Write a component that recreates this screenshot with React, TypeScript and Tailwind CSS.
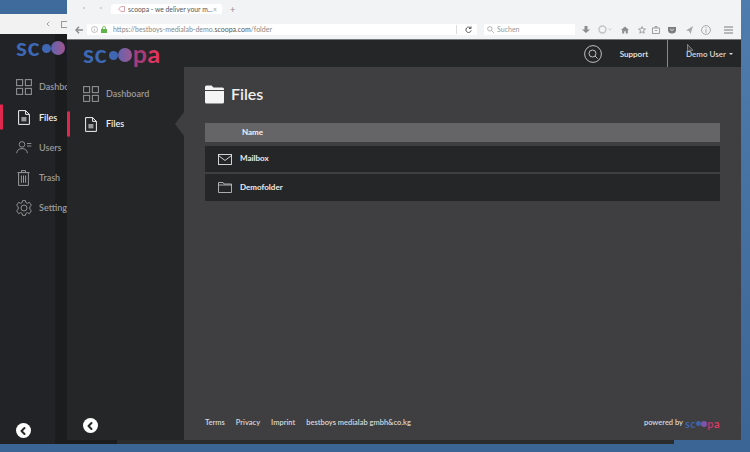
import React from "react";
import { ChevronLeft } from "lucide-react";

const font = "font-['Lato',sans-serif]";

const Logo = ({ small }: { small?: boolean }) => {
  // logo letters stay real text, the two o's are plain circles
  if (small) {
    return (
      <span className="flex items-center font-['Lato',sans-serif] text-[11px] font-bold leading-none tracking-[0.5px]">
        <span className="text-[#3f62a8]">sc</span>
        <span className="mt-[1px] h-[5px] w-[5px] rounded-full bg-[#3f62a8]" />
        <span className="mt-[1px] h-[6px] w-[6px] rounded-full bg-[#7d55a8]" />
        <span className="text-[#b23a6e]">p</span>
        <span className="text-[#d93a63]">a</span>
      </span>
    );
  }
  return (
    <span className="flex items-center font-['Lato',sans-serif] text-[25px] font-bold leading-none tracking-[0.4px]">
      <span className="text-[#3d68b5]">sc</span>
      <span className="ml-[2px] mt-[3px] h-[9px] w-[9px] shrink-0 rounded-full bg-[#4067b4]" />
      <span className="mt-[3px] h-[14px] w-[14px] shrink-0 rounded-full bg-gradient-to-r from-[#5f62b0] to-[#a0558f]" />
      <span className="ml-[1px] text-[#a83a78]">p</span>
      <span className="text-[#dd3560]">a</span>
    </span>
  );
};

const GridIcon = () => (
  <svg width="16" height="16" viewBox="0 0 16 16" fill="none" stroke="#8f8f90" strokeWidth="1.1">
    <rect x="0.6" y="0.6" width="6" height="6" />
    <rect x="9.4" y="0.6" width="6" height="6" />
    <rect x="0.6" y="9.4" width="6" height="6" />
    <rect x="9.4" y="9.4" width="6" height="6" />
  </svg>
);

const FileIcon = () => (
  <svg width="12" height="15" viewBox="0 0 12 15" fill="none" stroke="#f2f2f2" strokeWidth="1">
    <path d="M0.6 0.6H7.6L11.4 4.4V14.4H0.6Z" />
    <path d="M7.6 0.6V4.4H11.4" />
    <rect x="3.4" y="7" width="5" height="4.4" fill="#9a9a9a" stroke="none" />
  </svg>
);

const UsersIcon = () => (
  <svg width="16" height="13" viewBox="0 0 16 13" fill="none" stroke="#9a9a9b" strokeWidth="0.9">
    <circle cx="6" cy="3.4" r="2.8" />
    <path d="M0.6 12.2C1 9 3 7.6 6 7.6S11 9 11.4 12.2" />
    <path d="M11 2.5H15.4M11 5H15.4" />
  </svg>
);

const TrashIcon = () => (
  <svg width="13" height="16" viewBox="0 0 13 16" fill="none" stroke="#9a9a9b" strokeWidth="1">
    <path d="M0.5 2.6H12.5M4.5 2.4V0.6H8.5V2.4M1.6 2.6V15.4H11.4V2.6" />
    <path d="M4.4 5.5V12.8M6.5 5.5V12.8M8.6 5.5V12.8" />
  </svg>
);

const GearIcon = () => (
  <svg width="16" height="16" viewBox="0 0 16 16" fill="none" stroke="#9a9a9b" strokeWidth="0.9">
    <path d="M6.6 0.6H9.4L9.9 2.6L11.6 3.3L13.4 2.3L15.4 5.4L13.8 6.7V9.3L15.4 10.6L13.4 13.7L11.6 12.7L9.9 13.4L9.4 15.4H6.6L6.1 13.4L4.4 12.7L2.6 13.7L0.6 10.6L2.2 9.3V6.7L0.6 5.4L2.6 2.3L4.4 3.3L6.1 2.6Z" />
    <circle cx="8" cy="8" r="3" />
  </svg>
);

const BackCircle = () => (
  <span className="flex h-[15px] w-[15px] items-center justify-center rounded-full bg-white">
    <ChevronLeft size={12} strokeWidth={4} color="#252628" className="-ml-[1px]" />
  </span>
);

const NavItem = ({ icon, label, active }: { icon: React.ReactNode; label: string; active?: boolean }) => (
  <div className="relative flex h-[30px] items-center pl-[8px]">
    {active && <span className="absolute left-0 top-1/2 h-[25px] w-[3px] -translate-y-1/2 bg-[#e0284f]" />}
    <span className="flex w-[31px] justify-center">{icon}</span>
    <span className={`text-[9px] font-semibold whitespace-nowrap ${active ? "text-[#f2f2f2]" : "text-[#9a9a9b]"}`}>{label}</span>
  </div>
);

const BackWindow = () => (
  <div className={`absolute left-0 top-0 flex h-[444px] w-[674px] flex-col overflow-hidden bg-[#2a2b2d] ${font}`}>
    <div className="h-[14px] shrink-0 bg-[#3f6a9c]" />
    <div className="flex h-[20px] shrink-0 items-center gap-[6px] bg-[#f2f2f3] pl-[44px] text-[#777]">
      <ChevronLeft size={8} />
      <span className="ml-[3px] h-[7px] w-[7px] border border-[#999]" />
    </div>
    <div className="flex w-[117px] flex-1 flex-col bg-[linear-gradient(to_right,#222326_55px,#1b1c1e_55px)]">
      <div className="pl-[16px]">
        <Logo />
      </div>
      <div className="mt-[13px] flex flex-col gap-[0.25px]">
        <NavItem icon={<GridIcon />} label="Dashboard" />
        <NavItem active icon={<FileIcon />} label="Files" />
        <NavItem icon={<UsersIcon />} label="Users" />
        <NavItem icon={<TrashIcon />} label="Trash" />
        <NavItem icon={<GearIcon />} label="Settings" />
      </div>
      <div className="mb-[6px] mt-auto pl-[16px]">
        <BackCircle />
      </div>
    </div>
  </div>
);

const BrowserChrome = () => (
  <div className="h-[40px] shrink-0 border-b border-[#77787a] bg-[#f2f3f5] text-[#8d8d8f]">
    <div className="flex h-[24px] items-start pt-[4px]">
      <span className="ml-[16px] mt-[3px] h-[2px] w-[2px] bg-[#d4d4d6]" />
      <span className="ml-[15px] mt-[3px] h-[2px] w-[2px] bg-[#d4d4d6]" />
      <span className="ml-[9px] flex h-[10px] w-[111px] items-center rounded-t-[3px] bg-white pl-[7px] pr-[5px] text-[6.8px] text-[#555] whitespace-nowrap">
        <svg width="7" height="6" viewBox="0 0 7 6" fill="none" stroke="#d98a98" strokeWidth="0.8">
          <path d="M0.5 3L3 0.6H6.5V5.4H3Z" />
        </svg>
        <span className="ml-[3px] flex-1">scoopa - we deliver your m...</span>
        <span className="text-[#999]">×</span>
      </span>
      <span className="ml-[8px] text-[9px] leading-[12px]">+</span>
    </div>
    <div className="flex h-[11px] items-center">
      <svg className="ml-[8px]" width="8" height="8" viewBox="0 0 8 8" fill="none" stroke="#8d8d8f" strokeWidth="1.4">
        <path d="M4 0.8L1 4L4 7.2M1 4H8" />
      </svg>
      <div className="ml-[4px] flex h-[11px] w-[390px] items-center gap-[3px] bg-white pl-[4px] text-[7px] text-[#888]">
        <svg width="7" height="7" viewBox="0 0 7 7" fill="none" stroke="#999" strokeWidth="0.6">
          <circle cx="3.5" cy="3.5" r="3" />
          <path d="M3.5 3V5.2M3.5 1.8V2.4" />
        </svg>
        <svg width="6" height="7" viewBox="0 0 6 7">
          <path d="M1.5 3V2A1.5 1.5 0 0 1 4.5 2V3" fill="none" stroke="#5fb548" strokeWidth="0.8" />
          <rect y="3" width="6" height="4" fill="#5fb548" />
        </svg>
        <span className="ml-[3px] flex-1 whitespace-nowrap">
          https://bestboys-medialab-demo.<span className="text-[#555]">scoopa.com</span>/folder
        </span>
        <span className="h-[9px] w-px bg-[#ddd]" />
        <svg className="mx-[5px]" width="7" height="7" viewBox="0 0 7 7" fill="none" stroke="#555" strokeWidth="1">
          <path d="M5.8 2.2A2.7 2.7 0 1 0 6.2 4.5M6 0.5V2.5H4" />
        </svg>
      </div>
      <div className="ml-[7px] flex h-[11px] w-[91px] items-center gap-[3px] bg-white pl-[3px] text-[7px] text-[#999]">
        <svg width="7" height="7" viewBox="0 0 7 7" fill="none" stroke="#aaa" strokeWidth="0.9">
          <circle cx="2.8" cy="2.8" r="2.2" />
          <path d="M4.5 4.5L6.8 6.8" />
        </svg>
        <span>Suchen</span>
      </div>
      <div className="ml-[7px] flex items-center">
        <svg width="8" height="8" viewBox="0 0 8 8" fill="#8d8d8f"><path d="M2.5 0H5.5V3.5H8L4 7L0 3.5H2.5Z" /></svg>
        <svg className="ml-[8px]" width="14" height="9" viewBox="0 0 14 9" fill="none" stroke="#c4c4c6" strokeWidth="1.4">
          <circle cx="4.5" cy="4.5" r="3.5" />
          <path d="M10.5 3.5L12 5.2L13.5 3.5" strokeWidth="0.8" />
        </svg>
        <svg className="ml-[9px]" width="8" height="8" viewBox="0 0 8 8" fill="#8d8d8f"><path d="M4 0.5L8 4H6.8V7.5H4.8V5.2H3.2V7.5H1.2V4H0Z" /></svg>
        <svg className="ml-[9px]" width="8" height="8" viewBox="0 0 8 8" fill="none" stroke="#8d8d8f" strokeWidth="0.8"><path d="M4 0.6L5 3H7.5L5.5 4.6L6.2 7.2L4 5.8L1.8 7.2L2.5 4.6L0.5 3H3Z" /></svg>
        <svg className="ml-[6px]" width="8" height="8" viewBox="0 0 8 8" fill="none" stroke="#8d8d8f" strokeWidth="0.8"><rect x="0.5" y="2" width="7" height="5.5" /><path d="M3 2V0.5H5V2M3 4.5H5" /></svg>
        <svg className="ml-[8px]" width="8" height="8" viewBox="0 0 8 8"><path d="M0 1H8V4A4 3.5 0 0 1 0 4Z" fill="#7d7d7f" /><path d="M2.2 3L4 4.6L5.8 3" fill="none" stroke="#fff" strokeWidth="0.8" /></svg>
        <svg className="ml-[9px]" width="8" height="8" viewBox="0 0 8 8" fill="#a8a8aa"><path d="M8 0L5.5 8L4 5L1 4.5Z" /></svg>
        <svg className="ml-[8px]" width="10" height="10" viewBox="0 0 10 10" fill="none" stroke="#8d8d8f" strokeWidth="0.7"><circle cx="5" cy="5" r="4.4" /><path d="M5 4.2V7.8M5 2.2V3.3" /></svg>
        <svg className="ml-[13px]" width="9" height="8" viewBox="0 0 9 8" stroke="#7d7d7f" strokeWidth="1"><path d="M0 1H9M0 4H9M0 7H9" /></svg>
      </div>
    </div>
  </div>
);

const FolderSolid = () => (
  <svg width="19" height="19" viewBox="0 0 19 19" fill="#f4f4f4">
    <path d="M0 2A1.5 1.5 0 0 1 1.5 0.5H6.5L8.5 2.5H17.5A1.5 1.5 0 0 1 19 4V5H0Z" />
    <path d="M0 6H19V17A1.5 1.5 0 0 1 17.5 18.5H1.5A1.5 1.5 0 0 1 0 17Z" />
  </svg>
);

const MailIcon = () => (
  <svg width="14" height="11" viewBox="0 0 14 11" fill="none" stroke="#e4e4e4" strokeWidth="0.9">
    <rect x="0.5" y="0.5" width="13" height="10" />
    <path d="M0.5 1.5L7 6.5L13.5 1.5" />
  </svg>
);

const FolderOutline = () => (
  <svg width="14" height="11" viewBox="0 0 14 11" fill="none" stroke="#cfcfcf" strokeWidth="0.8">
    <path d="M0.5 10.5V0.5H5L6 2H13.5V10.5Z" />
    <path d="M0.5 3H13.5" />
  </svg>
);

const FileRow = ({ icon, name, className }: { icon: React.ReactNode; name: string; className: string }) => (
  <div className={`flex items-center bg-[#252628] ${className}`}>
    <span className="flex w-[35px] justify-center pl-[5px]">{icon}</span>
    <span className="-mt-[2px] text-[8px] font-bold text-[#ececec]">{name}</span>
  </div>
);

const FrontWindow = () => (
  <div className={`absolute left-[67px] top-0 flex h-[440px] w-[674px] flex-col overflow-hidden ${font}`}>
    <BrowserChrome />
    <header className="flex h-[27px] shrink-0 items-center bg-[#252628] pl-[16px]">
      <Logo />
      <svg className="ml-auto" width="18" height="18" viewBox="0 0 18 18" fill="none" stroke="#e4e4e4" strokeWidth="0.8">
        <circle cx="9" cy="9" r="8.4" />
        <circle cx="8.5" cy="8.5" r="3.5" />
        <path d="M11 11L13.5 13.5" />
      </svg>
      <span className="ml-[18px] text-[8px] font-semibold text-[#ececec]">Support</span>
      <span className="ml-[19px] h-full w-px bg-[#8a8a8b]" />
      <span className="ml-[18px] flex items-center gap-[3px] pr-[8px] text-[8px] font-semibold text-[#dcdcdc]">
        Demo User
        <span className="mt-[1px] border-x-[2px] border-t-[2px] border-x-transparent border-t-[#dcdcdc]" />
      </span>
    </header>
    <div className="flex flex-1">
      <aside className="relative flex w-[117px] shrink-0 flex-col bg-[#252628] pt-[12px]">
        <NavItem icon={<GridIcon />} label="Dashboard" />
        <NavItem active icon={<FileIcon />} label="Files" />
        <span className="absolute right-0 top-[45px] h-0 w-0 border-y-[12px] border-r-[9px] border-y-transparent border-r-[#3f3f41]" />
        <div className="mb-[7px] mt-auto pl-[16px]">
          <BackCircle />
        </div>
      </aside>
      <main className="flex flex-1 flex-col bg-[#3f3f41] pl-[21px] pr-[21px]">
        <div className="flex h-[56px] items-center gap-[7px] pb-[2px]">
          <FolderSolid />
          <h1 className="text-[16px] font-semibold text-[#f0f0f0]">Files</h1>
        </div>
        <div className="flex h-[19px] items-center bg-[#656567] pb-[2px] pl-[37px] text-[8px] font-bold text-[#f2f2f2]">Name</div>
        <div className="mt-[4px] flex flex-col gap-[2px]">
          <FileRow className="h-[26px]" icon={<MailIcon />} name="Mailbox" />
          <FileRow className="h-[27px]" icon={<FolderOutline />} name="Demofolder" />
        </div>
        <footer className="mt-auto flex h-[34px] items-center justify-between text-[7.5px] font-semibold text-[#d8d8d8]">
          <div className="flex gap-[11px]">
            <span>Terms</span>
            <span>Privacy</span>
            <span>Imprint</span>
            <span>bestboys medialab gmbh&co.kg</span>
          </div>
          <span className="flex items-center gap-[2px]">
            powered by <Logo small />
          </span>
        </footer>
      </main>
    </div>
  </div>
);

export default function App() {
  return (
    <div className="relative h-[452px] w-[750px] overflow-hidden bg-gradient-to-b from-[#4f7cae] to-[#3a6594]">
      <BackWindow />
      <FrontWindow />
      {/* mouse pointer */}
      <svg className="absolute left-[687px] top-[44px]" width="7" height="10" viewBox="0 0 7 10" fill="#3a3b3d" stroke="#d0d0d0" strokeWidth="0.5">
        <path d="M0.5 0.5V8L2.5 6.3H6Z" />
      </svg>
    </div>
  );
}
